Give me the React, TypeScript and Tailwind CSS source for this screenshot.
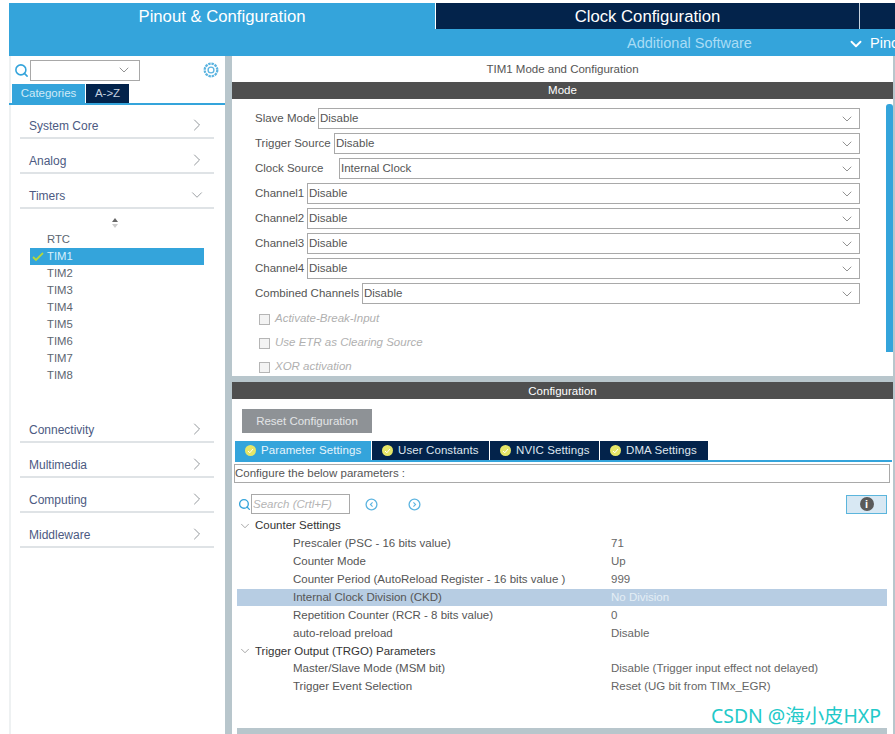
import { ChevronDown, ChevronRight, Search } from 'lucide-react';

const font = { fontFamily: '"Liberation Sans", Arial, sans-serif' };

const modeRows = [
  { label: 'Slave Mode', value: 'Disable', width: 'w-[63px]' },
  { label: 'Trigger Source', value: 'Disable', width: 'w-[79px]' },
  { label: 'Clock Source', value: 'Internal Clock', width: 'w-[84px]' },
  { label: 'Channel1', value: 'Disable', width: 'w-[52px]' },
  { label: 'Channel2', value: 'Disable', width: 'w-[52px]' },
  { label: 'Channel3', value: 'Disable', width: 'w-[52px]' },
  { label: 'Channel4', value: 'Disable', width: 'w-[52px]' },
  { label: 'Combined Channels', value: 'Disable', width: 'w-[107px]' },
];

const timers = ['RTC', 'TIM1', 'TIM2', 'TIM3', 'TIM4', 'TIM5', 'TIM6', 'TIM7', 'TIM8'];

const paramTree = [
  { label: 'Counter Settings', group: true },
  { label: 'Prescaler (PSC - 16 bits value)', value: '71' },
  { label: 'Counter Mode', value: 'Up' },
  { label: 'Counter Period (AutoReload Register - 16 bits value )', value: '999' },
  { label: 'Internal Clock Division (CKD)', value: 'No Division', selected: true },
  { label: 'Repetition Counter (RCR - 8 bits value)', value: '0' },
  { label: 'auto-reload preload', value: 'Disable' },
  { label: 'Trigger Output (TRGO) Parameters', group: true },
  { label: 'Master/Slave Mode (MSM bit)', value: 'Disable (Trigger input effect not delayed)' },
  { label: 'Trigger Event Selection', value: 'Reset (UG bit from TIMx_EGR)' },
];

function Category({ name, open }: { name: string; open?: boolean }) {
  return (
    <div className="h-[35px] border-b-2 border-[#dfe3e6] flex items-end justify-between pb-[2px] pl-[9px] pr-[7px] text-[12px] text-[#4c5a82]">
      <span className="leading-[18px]">{name}</span>
      {open ? (
        <ChevronDown size={18} strokeWidth={1} className="mb-[1px] mr-[1px] text-[#7d8388]" />
      ) : (
        <ChevronRight size={20} strokeWidth={1} className="text-[#7d8388]" />
      )}
    </div>
  );
}

function Dot() {
  return (
    <span className="w-[11px] h-[11px] rounded-full bg-[#e6e668] flex items-center justify-center shrink-0">
      <svg width="7" height="6" viewBox="0 0 7 6" fill="none">
        <path d="M1 3l1.8 1.8L6 1" stroke="#ffffff" strokeWidth="1" />
      </svg>
    </span>
  );
}

function ParamTab({ label, active, width }: { label: string; active?: boolean; width: string }) {
  return (
    <div className={`${width} ${active ? 'bg-[#34a4db] text-[#e6f4fb]' : 'bg-[#03234b] text-[#dfe6ee]'} h-[19px] flex items-center gap-[5px] pl-[10px] text-[11.5px] tracking-[0.1px] border-r border-white`}>
      <Dot />
      <span className="pt-[1px]">{label}</span>
    </div>
  );
}

export default function App() {
  return (
    <div style={font} className="relative w-[895px] h-[734px] overflow-hidden bg-white pt-[3px] pl-[9px] flex flex-col">
      {/* top tabs */}
      <div className="flex h-[26px] shrink-0 text-[16.7px] text-white">
        <div className="w-[426px] bg-[#34a4db] text-center leading-[28px]">Pinout &amp; Configuration</div>
        <div className="w-[424px] bg-[#03234b] text-center leading-[28px] border-l border-white">Clock Configuration</div>
        <div className="flex-1 bg-[#03234b] border-l border-[#c7d3de]" />
      </div>
      <div className="flex h-[27px] shrink-0 bg-[#34a4db] text-[14.5px] text-[#a9dcf5] leading-[29px] whitespace-nowrap">
        <span className="ml-[618px] w-[220px] shrink-0">Additional Software</span>
        <ChevronDown size={18} strokeWidth={2.5} className="mt-[6px] shrink-0 text-white" />
        <span className="ml-[5px] text-white">Pinout</span>
      </div>

      <div className="flex flex-1 min-h-0">
        {/* left sidebar */}
        <div className="w-[216px] shrink-0 flex flex-col border-l-2 border-[#eef1f2]">
          <div className="h-[28px] flex items-center -ml-[2px]">
            <Search size={15} strokeWidth={2.5} className="ml-[5px] text-[#34a4db]" />
            <div className="ml-[1px] w-[110px] h-[21px] border border-[#a8a8a8] flex items-center justify-end pr-[7px]">
              <ChevronDown size={16} strokeWidth={1.2} className="text-[#777]" />
            </div>
            <svg width="18" height="18" viewBox="0 0 16 16" className="ml-[62px]" fill="none">
              <circle cx="8" cy="8" r="5.6" stroke="#5cb4e0" strokeWidth="2" strokeDasharray="2.2 0.7" />
              <circle cx="8" cy="8" r="2.6" stroke="#5cb4e0" strokeWidth="1.2" />
            </svg>
          </div>
          <div className="-ml-[2px] h-[21px] flex items-start pl-[3px] border-b-2 border-[#34a4db] text-[11.5px]">
            <div className="w-[73px] h-[19px] bg-[#34a4db] text-[#cfeaf7] text-center leading-[19px]">Categories</div>
            <div className="ml-[1px] w-[43px] h-[19px] bg-[#03234b] text-[#c5d2e0] text-center leading-[19px]">A-&gt;Z</div>
          </div>
          <div className="-mt-[1px] pl-[9px] pr-[11px] flex flex-col">
            <Category name="System Core" />
            <Category name="Analog" />
            <Category name="Timers" open />
            <div className="h-[19px] flex justify-center items-end pl-[3px] pr-[8px]">
              <svg width="8" height="10" viewBox="0 0 8 10">
                <path d="M4 0l3 4H1z" fill="#666" />
                <path d="M4 10l3-4H1z" fill="#ccc" />
              </svg>
            </div>
            <div className="mt-[3px] flex flex-col h-[177px] text-[11.3px] text-[#5c6670]">
              {timers.map((t) =>
                t === 'TIM1' ? (
                  <div key={t} className="ml-[10px] w-[174px] h-[17px] bg-[#34a4db] flex items-center text-[#d9f0fb] leading-[17px]">
                    <svg width="12" height="10" viewBox="0 0 12 10" className="ml-[2px]" fill="none">
                      <path d="M1 5l3 3 7-7" stroke="#b5d83a" strokeWidth="1.8" />
                    </svg>
                    <span className="ml-[3px]">{t}</span>
                  </div>
                ) : (
                  <div key={t} className="pl-[27px] h-[17px] leading-[17px]">{t}</div>
                ),
              )}
            </div>
            <Category name="Connectivity" />
            <Category name="Multimedia" />
            <Category name="Computing" />
            <Category name="Middleware" />
          </div>
        </div>

        {/* splitter */}
        <div className="w-[7px] shrink-0 bg-[#b8c6cc]" />

        {/* main column */}
        <div className="flex-1 flex flex-col min-w-0">
          <div className="h-[26px] text-center text-[11.5px] leading-[26px] text-[#555]">TIM1 Mode and Configuration</div>
          <div className="h-[17px] bg-[#4f4f4f] text-white text-[11.5px] text-center leading-[17px]">Mode</div>

          <div className="h-[277px] flex shrink-0">
            <div className="flex-1 pl-[23px] pr-[26px] pt-[9px] flex flex-col">
              <div className="flex flex-col gap-[4px]">
                {modeRows.map((r) => (
                  <div key={r.label} className="flex h-[21px] items-center text-[11.5px] text-[#555]">
                    <span className={`${r.width} shrink-0 whitespace-nowrap`}>{r.label}</span>
                    <div className="flex-1 h-[21px] border border-[#a9a9a9] flex items-center justify-between pl-[1px] pr-[4px]">
                      <span>{r.value}</span>
                      <ChevronDown size={16} strokeWidth={1.2} className="text-[#777]" />
                    </div>
                  </div>
                ))}
              </div>
              <div className="mt-[3px] flex flex-col text-[11.5px] italic text-[#b0b0b0]">
                {['Activate-Break-Input', 'Use ETR as Clearing Source', 'XOR activation'].map((c) => (
                  <div key={c} className="h-[24px] flex items-center pl-[4px] gap-[5px]">
                    <span className="w-[11px] h-[11px] border border-[#b5b5b5] bg-[#f3f3f3]" />
                    <span>{c}</span>
                  </div>
                ))}
              </div>
            </div>
            <div className="w-[7px] pt-[5px] pb-[24px] shrink-0">
              <div className="h-full rounded-t-[3px] bg-[#34a4db]" />
            </div>
          </div>

          <div className="h-[6px] shrink-0 bg-[#b8c6cc]" />
          <div className="h-[17px] shrink-0 bg-[#4f4f4f] text-white text-[11.5px] text-center leading-[18px]">Configuration</div>

          <div className="pl-[10px] pt-[10px]">
            <div className="w-[130px] h-[24px] bg-[#8e9296] text-[#e3e5e7] text-[11.5px] text-center leading-[24px]">Reset Configuration</div>
          </div>

          <div className="mt-[8px] ml-[3px] mr-[1px] flex border-b-2 border-[#34a4db] h-[21px]">
            <ParamTab label="Parameter Settings" active width="w-[137px]" />
            <ParamTab label="User Constants" width="w-[118px]" />
            <ParamTab label="NVIC Settings" width="w-[110px]" />
            <ParamTab label="DMA Settings" width="w-[109px]" />
          </div>

          <div className="mt-[2px] ml-[2px] mr-[3px] h-[19px] border border-[#a9a9a9] text-[11.5px] text-[#555] leading-[17px]">Configure the below parameters :</div>

          <div className="mt-[11px] h-[20px] flex items-center pl-[7px] pr-[6px]">
            <Search size={13} strokeWidth={2.5} className="-ml-[1px] text-[#34a4db]" />
            <div className="w-[99px] h-[20px] border border-[#a9a9a9] text-[11.5px] italic text-[#b4b4b4] leading-[18px] pl-[1px]">Search (Crtl+F)</div>
            <svg width="13" height="13" viewBox="0 0 12 12" className="ml-[15px]" fill="none">
              <circle cx="6" cy="6" r="5" stroke="#5cb4e0" strokeWidth="1.2" />
              <path d="M7 4L5 6l2 2" stroke="#5cb4e0" />
            </svg>
            <svg width="13" height="13" viewBox="0 0 12 12" className="ml-[30px]" fill="none">
              <circle cx="6" cy="6" r="5" stroke="#5cb4e0" strokeWidth="1.2" />
              <path d="M5 4l2 2-2 2" stroke="#5cb4e0" />
            </svg>
            <div className="ml-auto w-[41px] h-[19px] bg-[#d8e8f3] border border-[#5bb5dc] flex items-center justify-center">
              <span className="w-[14px] h-[14px] rounded-full bg-[#5a5a5a] text-white text-[11px] font-bold leading-[14px] text-center">i</span>
            </div>
          </div>

          <div className="mt-[3px] ml-[5px] mr-[6px] flex flex-col text-[11.5px] text-[#555]">
            {paramTree.map((p) =>
              p.group ? (
                <div key={p.label} className="h-[17.9px] flex items-center text-[#333]">
                  <ChevronDown size={14} strokeWidth={1.1} className="ml-[1px] text-[#777]" />
                  <span className="ml-[3px]">{p.label}</span>
                </div>
              ) : (
                <div key={p.label} className={`h-[17.9px] flex items-center pl-[56px] ${p.selected ? 'bg-[#b7cde3]' : ''}`}>
                  <span className="w-[318px] shrink-0 whitespace-nowrap">{p.label}</span>
                  <span className={p.selected ? 'text-[#e4edf5]' : 'text-[#666]'}>{p.value}</span>
                </div>
              ),
            )}
          </div>

          <div className="mt-auto ml-[5px] mr-[6px] h-[6px] bg-[#b8c6cc]" />
        </div>

        <div className="w-[2px] shrink-0 bg-[#b8c6cc]" />
      </div>

      {/* blog watermark */}
      <div className="absolute left-[711px] top-[705px] text-[19.4px] leading-[22px] text-[#22c9c9] whitespace-nowrap" style={{ fontFamily: '"Noto Sans", "Noto Sans CJK SC", sans-serif' }}>
        CSDN @海小皮HXP
      </div>
    </div>
  );
}
